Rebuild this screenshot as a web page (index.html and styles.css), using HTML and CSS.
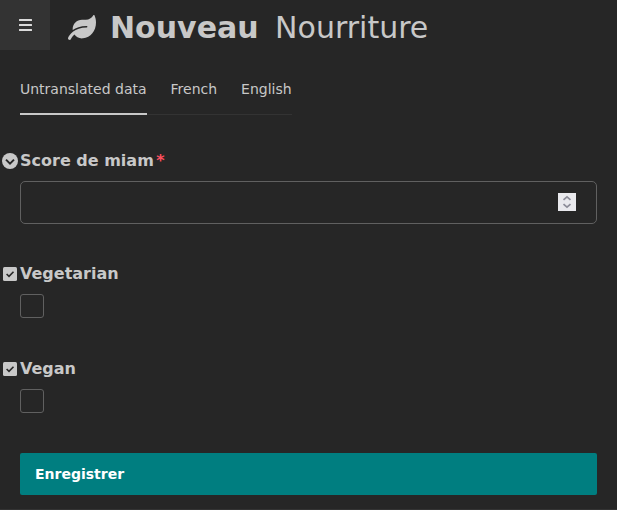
FILE: index.html
```html
<!DOCTYPE html>
<html lang="fr">
<head>
<meta charset="utf-8">
<title>Nouveau Nourriture</title>
<link rel="stylesheet" href="styles.css">
</head>
<body>
<header class="header">
  <button class="menu" aria-label="Menu">
    <svg width="13" height="14" viewBox="0 0 13 14"><path d="M.8 2h11.4M.8 7h11.4M.8 12h11.4"/></svg>
  </button>
  <h1 class="title">
    <svg class="leaf" viewBox="0 0 576 512"><path d="M546.2 9.7c-5.6-12.5-21.6-13-28.3-1.2C486.9 62.4 431.4 96 368 96h-80C182 96 96 182 96 288c0 7 .8 13.7 1.5 20.5C161.3 262.8 253.4 224 384 224c8.8 0 16 7.2 16 16s-7.2 16-16 16C132.6 256 26 410.1 2.4 468c-6.6 16.3 1.2 34.9 17.5 41.6 16.4 6.8 35-1.1 41.8-17.3 1.5-3.6 20.9-47.9 71.9-90.6 32.4 43.9 94 85.8 174.9 77.2C465.5 467.5 576 326.7 576 154.3c0-50.2-10.8-102.2-29.8-144.6z"/></svg>
    <strong>Nouveau</strong>
    <span>Nourriture</span>
  </h1>
</header>
<main class="content">
  <nav class="tabs">
    <a class="tab active">Untranslated data</a>
    <a class="tab">French</a>
    <a class="tab">English</a>
  </nav>
  <form>
    <div class="field">
      <label class="label" for="score">
        <svg class="icon" viewBox="0 0 16 16"><circle cx="8" cy="8" r="8"/><path class="mark" d="M4 6.6l4 4 4-4"/></svg>Score de miam<span class="required">*</span>
      </label>
      <div class="number">
        <input id="score" type="text">
        <svg class="spinner" width="18" height="18" viewBox="0 0 18 18"><path d="M5.5 6.9L9 3.8l3.5 3.1M5.5 11.1L9 14.2l3.5-3.1"/></svg>
      </div>
    </div>
    <div class="field">
      <label class="label" for="vegetarian">
        <svg class="icon" viewBox="0 0 16 16"><rect x="1" y="1" width="14" height="14" rx="1.5"/><path class="check" d="M4.6 8l2.4 2.3 4.5-4.6"/></svg>Vegetarian
      </label>
      <input class="checkbox" id="vegetarian" type="checkbox">
    </div>
    <div class="field">
      <label class="label" for="vegan">
        <svg class="icon" viewBox="0 0 16 16"><rect x="1" y="1" width="14" height="14" rx="1.5"/><path class="check" d="M4.6 8l2.4 2.3 4.5-4.6"/></svg>Vegan
      </label>
      <input class="checkbox" id="vegan" type="checkbox">
    </div>
    <button class="submit" type="button">Enregistrer</button>
  </form>
</main>
<footer class="footer"></footer>
</body>
</html>
```
FILE: styles.css
```css
* {
  box-sizing: border-box;
}

body {
  margin: 0;
  height: 510px;
  overflow: hidden;
  display: flex;
  flex-direction: column;
  background: #262626;
  color: #c8c8c8;
  font: 14px/20px "DejaVu Sans", sans-serif;
}

.header {
  display: flex;
  height: 50px;
}

.menu {
  display: flex;
  align-items: center;
  justify-content: center;
  width: 50px;
  height: 50px;
  padding: 0 0 0 1px;
  border: 0;
  background: #333;
}

.menu svg {
  fill: none;
  stroke: #dcdcdc;
  stroke-width: 2;
  stroke-linecap: round;
}

.title {
  display: flex;
  align-items: center;
  margin: 0;
  padding: 6px 0 0 18px;
  font-size: 30px;
  font-weight: 400;
  line-height: 46px;
}

.title strong {
  margin: 0 16.5px 0 14px;
}

.leaf {
  width: 28px;
  height: 25px;
  margin-bottom: 2px;
  fill: #c8c8c8;
}

.content {
  flex: 1;
  padding: 19px 20px 0;
}

.tabs {
  display: flex;
  gap: 24px;
  width: fit-content;
  height: 46px;
  margin-bottom: 36px;
  box-shadow: inset 0 -1px #333;
}

.tab {
  padding-top: 10px;
}

.active {
  border-bottom: 2px solid #c8c8c8;
}

.label {
  display: flex;
  align-items: center;
  height: 20px;
  margin: 0 0 10px -18px;
  font-size: 16px;
  font-weight: 700;
}

.icon {
  width: 16px;
  height: 16px;
  margin: 0 2px 0 0;
  fill: #c8c8c8;
}

.mark,
.check {
  fill: none;
  stroke: #262626;
  stroke-width: 2;
}

.check {
  stroke-width: 1.6;
}

.required {
  margin-left: 2.5px;
  color: #ff4f5e;
}

.number {
  display: flex;
  align-items: center;
  height: 43px;
  margin-bottom: 40px;
  padding: 0 20px 1px 10px;
  border: 1px solid #606060;
  border-radius: 5px;
}

.number input {
  flex: 1;
  border: 0;
  outline: 0;
  background: none;
  color: inherit;
}

.spinner {
  background: #e9e9ed;
  fill: none;
  stroke: #8c8c98;
  stroke-width: 1.7;
}

.checkbox {
  display: block;
  appearance: none;
  width: 24px;
  height: 24px;
  margin: 0 0 41px;
  border: 1px solid #606060;
  border-radius: 3px;
}

.field:last-of-type .checkbox {
  margin-bottom: 40px;
}

.submit {
  display: block;
  width: 100%;
  height: 42px;
  padding: 0 15px;
  border: 0;
  border-radius: 2px;
  background: #007e80;
  color: #fff;
  font: 700 14px "DejaVu Sans", sans-serif;
  text-align: left;
}

.footer {
  height: 1px;
  background: #333;
}
```
